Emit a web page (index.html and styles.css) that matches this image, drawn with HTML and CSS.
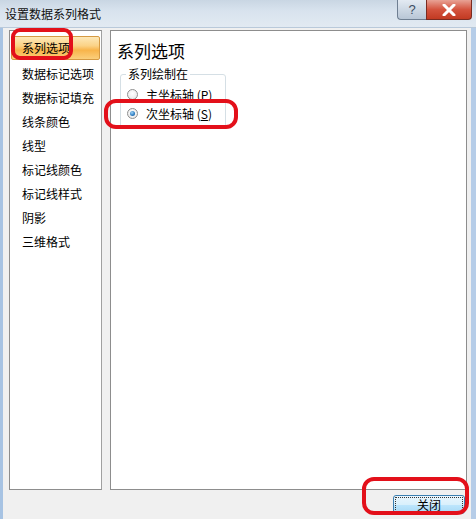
FILE: index.html
```html
<!DOCTYPE html>
<html lang="zh-CN">
<head>
  <meta charset="UTF-8">
  <title>设置数据系列格式</title>
  <link rel="stylesheet" href="styles.css">
</head>
<body>
  <div class="window">
    <div class="titlebar">
      <span class="title">设置数据系列格式</span>
      <div class="caption-buttons">
        <span class="cap-btn help">?</span>
        <span class="cap-btn close">
          <svg width="14" height="12" viewBox="0 0 14 12"><path d="M2 1 L12 11 M12 1 L2 11" stroke="#fff" stroke-width="3" stroke-linecap="round"/></svg>
        </span>
      </div>
    </div>
    <div class="body">
      <div class="panels">
        <ul class="nav">
          <li class="active">系列选项</li>
          <li>数据标记选项</li>
          <li>数据标记填充</li>
          <li>线条颜色</li>
          <li>线型</li>
          <li>标记线颜色</li>
          <li>标记线样式</li>
          <li>阴影</li>
          <li>三维格式</li>
        </ul>
        <div class="content">
          <h2>系列选项</h2>
          <fieldset class="group">
            <legend>系列绘制在</legend>
            <label class="radio"><span class="dot"></span><span class="label">主坐标轴 (<u>P</u>)</span></label>
            <label class="radio"><span class="dot on"></span><span class="label">次坐标轴 (<u>S</u>)</span></label>
          </fieldset>
        </div>
      </div>
      <div class="footer">
        <button class="btn">关闭</button>
      </div>
    </div>
    <div class="mark mark-nav"></div>
    <div class="mark mark-radio"></div>
    <div class="mark mark-btn"></div>
  </div>
</body>
</html>
```

FILE: styles.css
```css
html, body {
  margin: 0;
  padding: 0;
}
body {
  font-family: "Noto Sans CJK SC", "Liberation Sans", sans-serif;
  font-size: 12px;
  color: #000;
  background: #f0f0f0;
}
.window {
  position: relative;
  width: 476px;
  height: 519px;
  overflow: hidden;
  background: #f0f0f0;
}
.titlebar {
  height: 28px;
  display: flex;
  align-items: flex-start;
  justify-content: space-between;
  background: linear-gradient(180deg, #c9d6e3 0%, #d8e3ee 40%, #e2eaf2 100%);
  border-bottom: 1px solid #b9c9da;
  box-sizing: border-box;
}
.title {
  padding: 6px 0 0 5px;
  font-size: 12px;
  line-height: 16px;
  color: #111;
}
.caption-buttons {
  display: flex;
  margin-right: 4px;
}
.cap-btn {
  height: 20px;
  display: flex;
  align-items: center;
  justify-content: center;
  box-sizing: border-box;
  border: 1px solid #6f7f92;
  border-top: none;
}
.help {
  width: 29px;
  border-radius: 0 0 0 4px;
  background: linear-gradient(180deg, #e3eaf2 0%, #cdd8e4 50%, #b8c6d6 100%);
  color: #3b4d63;
  font-size: 13px;
  font-family: "Liberation Sans", sans-serif;
  border-right: none;
}
.close {
  width: 46px;
  border-radius: 0 0 4px 0;
  background: linear-gradient(180deg, #e8a295 0%, #d4533e 50%, #c23a22 100%);
  border-color: #7a2b20;
}
.body {
  border-left: 3px solid #a7c3e3;
  border-right: 5px solid #b6cde8;
  height: 491px;
  box-sizing: border-box;
  padding: 2px 0 0 6px;
  display: flex;
  flex-direction: column;
}
.panels {
  display: flex;
  gap: 8px;
  height: 460px;
}
.nav {
  list-style: none;
  margin: 0;
  padding: 5px 1px 0;
  width: 93px;
  box-sizing: border-box;
  background: #fff;
  border: 1px solid #8d8d8d;
  border-right-color: #a0a0a0;
}
.nav li {
  height: 24px;
  line-height: 24px;
  padding-left: 11px;
  white-space: nowrap;
}
.nav li.active {
  height: 22px;
  line-height: 22px;
  margin-bottom: 2px;
  border: 1px solid #d59a43;
  border-radius: 2px;
  padding-left: 10px;
  background: linear-gradient(180deg, #fde8b8 0%, #fbd286 40%, #f8b44a 60%, #fbcf7c 100%);
}
.content {
  flex: 1;
  margin-right: 4px;
  background: #fff;
  border: 1px solid #8d8d8d;
  padding: 8px 0 0 6px;
  box-sizing: border-box;
}
.content h2 {
  margin: 0 0 4px;
  font-size: 17px;
  font-weight: normal;
  line-height: 24px;
}
.group {
  width: 106px;
  box-sizing: border-box;
  margin: 0 0 0 3px;
  padding: 4px 0 5px 6px;
  border: 1px solid #d5dfe5;
  border-radius: 3px;
}
.group legend {
  padding: 0 2px;
  margin-left: -1px;
  font-size: 12px;
  line-height: 14px;
}
.radio {
  display: flex;
  align-items: center;
  height: 19px;
  gap: 8px;
  white-space: nowrap;
}
.dot {
  flex: none;
  width: 11px;
  height: 11px;
  border-radius: 50%;
  border: 1px solid #8f8f8f;
  background: radial-gradient(circle at 50% 40%, #ffffff 0%, #e4e4e4 100%);
  box-sizing: border-box;
  position: relative;
}
.dot.on::after {
  content: "";
  position: absolute;
  left: 2px;
  top: 2px;
  width: 5px;
  height: 5px;
  border-radius: 50%;
  background: radial-gradient(circle at 40% 35%, #9fd3f7 0%, #2b7bc0 60%, #1a4f8a 100%);
}
.footer {
  display: flex;
  justify-content: flex-end;
  padding: 5px 6px 0 0;
}
.btn {
  width: 72px;
  height: 19px;
  padding: 0;
  font-family: inherit;
  font-size: 12px;
  line-height: 16px;
  color: #000;
  border: 1px solid #3c7fb1;
  border-radius: 3px;
  background: linear-gradient(180deg, #eaf6fd 0%, #d9f0fc 50%, #bee6fd 51%, #a7d9f5 100%);
  outline: 1px dotted #333;
  outline-offset: -3px;
}
.mark {
  position: absolute;
  border: 4px solid #e3101a;
  border-radius: 9px;
  box-sizing: border-box;
}
.mark-nav {
  left: 11px;
  top: 28px;
  width: 62px;
  height: 32px;
}
.mark-radio {
  left: 104px;
  top: 99px;
  width: 134px;
  height: 30px;
  border-radius: 12px;
}
.mark-btn {
  left: 362px;
  top: 477px;
  width: 107px;
  height: 38px;
  border-radius: 12px;
}
```
